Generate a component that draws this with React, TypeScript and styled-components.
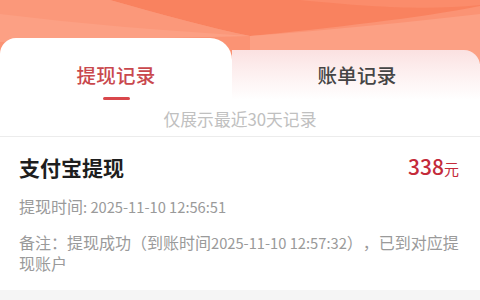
import * as React from 'react'
import styled, { createGlobalStyle } from 'styled-components'

const GlobalStyle = createGlobalStyle`
  * { box-sizing: border-box; }
  body {
    margin: 0;
    background: #f5f5f5;
    font-family: "Noto Sans CJK SC", "Noto Sans", sans-serif;
    text-spacing-trim: space-all;
  }
`

const Page = styled.div`
  width: 480px;
  height: 300px;
  overflow: hidden;
  background: #f5f5f5;
`

const Hero = styled.header`
  position: relative;
  background: #fff;
`

const Waves = styled.svg`
  position: absolute;
  top: 0;
  left: 0;
  width: 480px;
  height: 64px;
  z-index: 0;
`

const TabRow = styled.nav`
  position: relative;
  z-index: 1;
  display: flex;
  align-items: flex-start;
  padding-top: 38px;
`

const Tab = styled.div<{ $active?: boolean }>`
  display: flex;
  flex-direction: column;
  align-items: center;
  width: ${({ $active }) => ($active ? '232px' : 'auto')};
  flex: ${({ $active }) => ($active ? 'none' : '1')};
  height: ${({ $active }) => ($active ? '62px' : '50px')};
  margin-top: ${({ $active }) => ($active ? '0' : '12px')};
  padding-top: ${({ $active }) => ($active ? '24px' : '12px')};
  padding-left: ${({ $active }) => ($active ? '0' : '2px')};
  background: ${({ $active }) =>
    $active ? '#ffffff' : 'linear-gradient(180deg, #fbe1e1 0%, #fdf1f1 50%, #ffffff 100%)'};
  border-radius: ${({ $active }) => ($active ? '16px 22px 0 0' : '0 16px 0 0')};
`

const TabLabel = styled.span<{ $active?: boolean }>`
  font-size: 19.5px;
  line-height: 26px;
  font-weight: 500;
  letter-spacing: 0.2px;
  color: ${({ $active }) => ($active ? '#c9484d' : '#454545')};
`

const Indicator = styled.i`
  display: block;
  width: 27px;
  height: 3.5px;
  margin-top: 9px;
  border-radius: 2px;
  background: #d9474b;
`

const Notice = styled.div`
  position: relative;
  z-index: 1;
  height: 37px;
  padding-top: 7px;
  text-align: center;
  font-size: 16.8px;
  line-height: 24px;
  color: #c0c0c0;
  background: #fff;
  border-bottom: 1px solid #ececec;
`

const Card = styled.section`
  background: #fff;
  padding: 15px 21px 15px 19px;
`

const TitleRow = styled.div`
  display: flex;
  justify-content: space-between;
  align-items: center;
  height: 30px;
`

const Title = styled.h2`
  margin: 0;
  font-size: 21px;
  line-height: 30px;
  font-weight: 700;
  color: #1e1e1e;
`

const Amount = styled.span`
  font-size: 21px;
  line-height: 30px;
  font-weight: 500;
  color: #c42a3a;

  small {
    font-size: 15px;
    font-weight: 400;
  }
`

const Meta = styled.p<{ $gap: number }>`
  margin: ${({ $gap }) => $gap}px 0 0;
  font-size: 16px;
  line-height: 21.5px;
  color: #9a9a9a;
`

const Num = styled.span`
  font-size: 14.7px;
`

export default function App() {
  return (
    <Page>
      <GlobalStyle />
      <Hero>
        <Waves viewBox="0 0 480 64" preserveAspectRatio="none">
          <rect width="480" height="64" fill="#fb9374" />
          <path d="M110 0 H480 V6 C420 18 330 28 250 36 C210 28 160 14 110 0 Z" fill="#f9825f" />
          <path d="M0 0 H110 C160 14 210 28 250 36 L0 40 Z" fill="#fb987a" />
          <path d="M0 14 C80 24 170 31 250 36 L0 42 Z" fill="#fca084" />
          <path d="M250 36 C330 30 410 22 480 14 V64 H250 Z" fill="#fca084" />
          <path d="M300 0 H480 V5 C430 10 380 8 300 0 Z" fill="#fb8c6b" />
        </Waves>
        <TabRow>
          <Tab $active>
            <TabLabel $active>提现记录</TabLabel>
            <Indicator />
          </Tab>
          <Tab>
            <TabLabel>账单记录</TabLabel>
          </Tab>
        </TabRow>
        <Notice>仅展示最近30天记录</Notice>
      </Hero>
      <Card>
        <TitleRow>
          <Title>支付宝提现</Title>
          <Amount>
            338<small>元</small>
          </Amount>
        </TitleRow>
        <Meta $gap={14}>
          提现时间<Num>: 2025-11-10 12:56:51</Num>
        </Meta>
        <Meta $gap={14}>
          备注：提现成功（到账时间<Num>2025-11-10 12:57:32</Num>），已到对应提现账户
        </Meta>
      </Card>
    </Page>
  )
}
